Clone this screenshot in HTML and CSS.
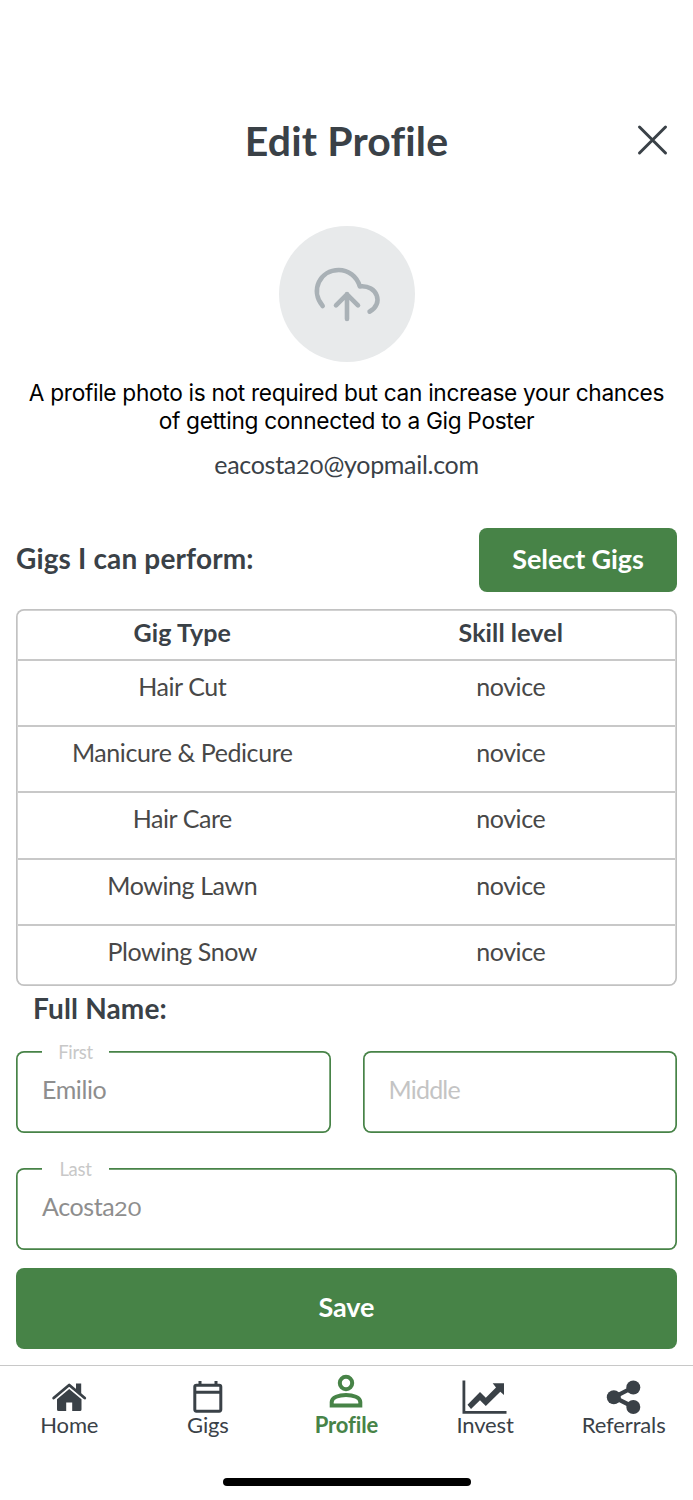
FILE: index.html
```html
<!DOCTYPE html>
<html lang="en">
<head>
<meta charset="utf-8">
<title>Edit Profile</title>
<link rel="stylesheet" href="styles.css">
</head>
<body>
<div class="screen">
  <header class="header">
    <h1 class="title">Edit Profile</h1>
    <button class="close" aria-label="Close">
      <svg width="30" height="30" viewBox="0 0 30 30" fill="none" stroke="#3a4147" stroke-width="3" stroke-linecap="round"><path d="M2.5 2 28.5 28M28.5 2 2.5 28"/></svg>
    </button>
  </header>
  <section class="photo">
    <div class="avatar">
      <svg width="136" height="136" viewBox="0 0 136 136" fill="none" stroke="#a9b1b6" stroke-width="4.6" stroke-linecap="round" stroke-linejoin="round"><path d="M43.7 80C30.5 64 41.5 44 59.7 44C69 44 78 50 80.8 60.4C98.5 58.5 105 78 90.6 85.6"/><path d="M68 93V68M57 79.3 68 68.3 79 79.3"/></svg>
    </div>
    <p class="hint">A profile photo is not required but can increase your chances<br><span class="hint-end">of getting connected to a Gig Poster</span></p>
    <p class="email">eacosta<span class="num">20</span>@yopmail.com</p>
  </section>
  <section class="gigs-head">
    <h2 class="label">Gigs I can perform:</h2>
    <button class="btn select">Select Gigs</button>
  </section>
  <div class="table">
    <div class="row head"><span>Gig Type</span><span>Skill level</span></div>
    <div class="row"><span>Hair Cut</span><span>novice</span></div>
    <div class="row"><span>Manicure &amp; Pedicure</span><span>novice</span></div>
    <div class="row"><span>Hair Care</span><span>novice</span></div>
    <div class="row"><span>Mowing Lawn</span><span>novice</span></div>
    <div class="row last"><span>Plowing Snow</span><span>novice</span></div>
  </div>
  <h2 class="label name-label">Full Name:</h2>
  <div class="fields">
    <div class="field"><span class="legend">First</span><span class="value">Emilio</span></div>
    <div class="field"><span class="value placeholder">Middle</span></div>
    <div class="field wide"><span class="legend">Last</span><span class="value">Acosta<span class="num">20</span></span></div>
  </div>
  <button class="btn save">Save</button>
  <nav class="tabs">
    <a class="tab"><svg width="46" height="36" viewBox="0 0 46 36" fill="#3a4147"><path d="M7.7 19 23.2 6 38.7 19" fill="none" stroke="#3a4147" stroke-width="2.9" stroke-linecap="round" stroke-linejoin="round"/><path d="M30 4.5h5.2V16L30 11.5zM11 20.2 23.2 10 35.5 20.2V30.5q0 1.5-1.5 1.5H26.2v-8.5h-6V32h-7.7q-1.5 0-1.5-1.5z"/></svg><span>Home</span></a>
    <a class="tab"><svg width="46" height="36" viewBox="0 0 46 36" fill="none" stroke="#3a4147" stroke-width="3"><rect x="9.8" y="6.2" width="26" height="26" rx="1.6"/><path d="M10 13.2H36M15 6V2M31 6V2"/></svg><span>Gigs</span></a>
    <a class="tab active"><svg width="46" height="36" viewBox="0 0 46 36" fill="none" stroke="#478347" stroke-width="4"><circle cx="23" cy="4" r="6.2"/><path d="M8.7 26.4V23C8.7 13.7 37.3 13.7 37.3 23V26.4Z"/></svg><span>Profile</span></a>
    <a class="tab"><svg width="46" height="36" viewBox="0 0 46 36" fill="#3a4147"><path d="M.5 1.5H3.3V32H44.5V34.7H.5zM5.5 25.8 18 13 23.8 18.8 34 8.6 30.7 4.3H42V16L38.3 12.8 23.8 27 18 21.2 9 30z"/></svg><span>Invest</span></a>
    <a class="tab"><svg width="46" height="36" viewBox="0 0 46 36" fill="#3a4147"><path d="M32.5 8.2 13 18.2 32.5 28" fill="none" stroke="#3a4147" stroke-width="4.2"/><circle cx="32.3" cy="8.5" r="7"/><circle cx="12.8" cy="18.2" r="7"/><circle cx="32.3" cy="28" r="7"/></svg><span>Referrals</span></a>
  </nav>
  <div class="home-bar"></div>
</div>
</body>
</html>
```
FILE: styles.css
```css
* { box-sizing: border-box; margin: 0; padding: 0; }
body { background: #fff; font-family: Lato, "Noto Sans", sans-serif; color: #3a4147; font-variant-ligatures: none; }
button { border: 0; background: none; font: inherit; }
svg { display: block; overflow: visible; }
.screen { width: 693px; height: 1500px; display: flex; flex-direction: column; overflow: hidden; }
.header { height: 226px; padding: 110px 26px 0; display: grid; grid-template-columns: 30px 1fr 30px; align-items: start; }
.title { grid-column: 2; text-align: center; font-size: 41px; line-height: 62px; font-weight: 700; letter-spacing: .15px; }
.close { padding-top: 15px; }
.photo { height: 302px; display: flex; flex-direction: column; align-items: center; text-align: center; }
.avatar { width: 136px; height: 136px; border-radius: 50%; background: #e8eaeb; }
.hint { margin-top: 17px; font-family: Inter, sans-serif; font-size: 22.7px; line-height: 27.5px; letter-spacing: -.32px; color: #000; white-space: nowrap; }
.email { margin-top: 9px; font-size: 25px; line-height: 42px; letter-spacing: -.3px; }
.num { display: inline-block; font-size: .74em; letter-spacing: 0; transform: scaleX(1.27); margin: 0 3px; }
.gigs-head { height: 81px; padding: 0 16px; display: flex; justify-content: space-between; align-items: flex-start; }
.label { font-size: 28px; line-height: 61px; font-weight: 700; letter-spacing: .15px; }
.btn { background: #478347; color: #fff; border-radius: 8px; font-weight: 700; font-size: 27px; text-align: center; padding-bottom: 4px; letter-spacing: -.1px; }
.select { width: 198px; height: 64px; }
.table { margin: 0 16px; height: 377px; padding: 2px; box-shadow: inset 0 0 0 1.7px #c2c2c2; border-radius: 8px; font-size: 25px; color: #484848; letter-spacing: -.42px; }
.row { height: 66.4px; padding-top: 6px; display: grid; grid-template-columns: 1fr 1fr; text-align: center; line-height: 38px; border-bottom: 2px solid #c8c8c8; }
.head { height: 49.5px; padding-top: 2px; font-weight: 700; color: #3a4147; letter-spacing: .1px; }
.last { border-bottom: 0; height: auto; }
.name-label { padding-left: 33px; line-height: 45px; height: 65px; }
.fields { margin: 0 16px; height: 217px; display: grid; grid-template-columns: 1fr 1fr; column-gap: 32px; row-gap: 35px; align-content: start; }
.field { position: relative; height: 82px; box-shadow: inset 0 0 0 1.7px #478347; border-radius: 8px; padding: 18px 26px; }
.wide { grid-column: 1 / 3; }
.legend { position: absolute; left: 26px; top: -13px; width: 67px; line-height: 28px; font-size: 18.5px; text-align: center; background: #fff; color: #c8c8c8; letter-spacing: -.3px; }
.value { font-size: 25px; line-height: 40px; color: #8e8e8e; letter-spacing: -.4px; }
.placeholder { color: #c4c4c4; letter-spacing: -.8px; }
.save { margin: 0 16px; height: 81px; }
.tabs { margin-top: 16px; border-top: 1px solid #c8c8c8; height: 113px; padding-top: 13px; display: grid; grid-template-columns: repeat(5, 1fr); }
.tab { display: flex; flex-direction: column; align-items: center; font-size: 22px; line-height: 20px; letter-spacing: -.15px; }
.active { color: #478347; font-weight: 700; }
.home-bar { width: 248px; height: 8px; border-radius: 4px; background: #000; margin: 0 auto; }
```
